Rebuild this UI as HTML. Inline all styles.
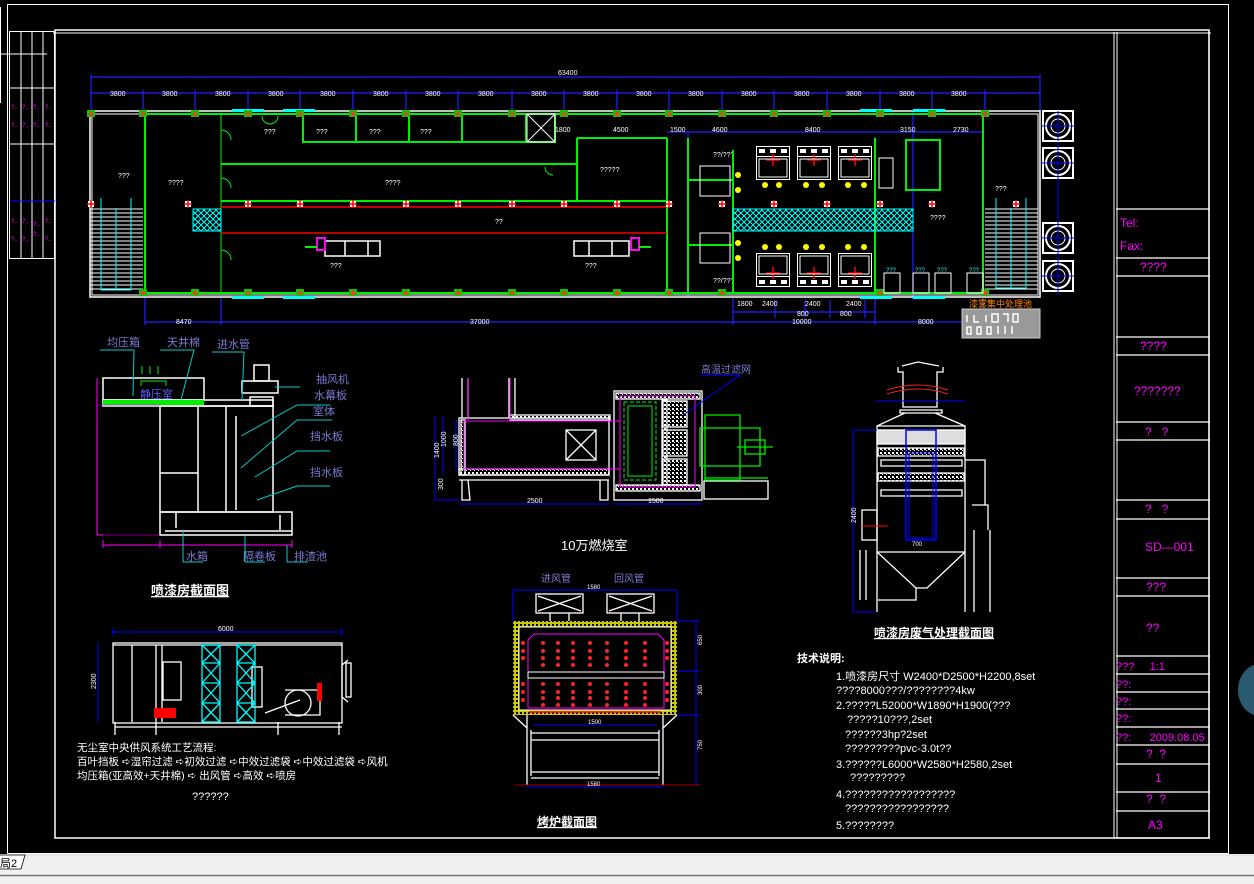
<!DOCTYPE html>
<html><head><meta charset="utf-8"><style>
html,body{margin:0;padding:0;background:#000;width:1254px;height:884px;overflow:hidden}
svg{display:block}
text{font-family:"Liberation Sans","Noto Sans CJK SC",sans-serif}
</style></head><body>
<svg width="1254" height="884" viewBox="0 0 1254 884" xmlns="http://www.w3.org/2000/svg">
<defs>
<pattern id="hx" width="6" height="6" patternUnits="userSpaceOnUse"><path d="M0 0L6 6M6 0L0 6" stroke="#0ff" stroke-width="1"/></pattern>
<pattern id="st" width="10" height="4" patternUnits="userSpaceOnUse"><path d="M0 1H10" stroke="#fff" stroke-width="1"/></pattern>
<pattern id="dot" width="4" height="4" patternUnits="userSpaceOnUse"><rect width="2" height="2" fill="#fff"/><rect x="2" y="2" width="1" height="1" fill="#fff"/></pattern>
<pattern id="ydot" width="4" height="4" patternUnits="userSpaceOnUse"><rect width="4" height="4" fill="#c8c800"/><rect width="2" height="2" fill="#000"/></pattern>
<symbol id="col" width="8" height="8"><rect x="0" y="0" width="8" height="7" fill="#0c0"/><path d="M4 1V7M1 4H7" stroke="#f33" stroke-width="1.5"/></symbol>
<symbol id="rx" width="8" height="8"><rect x="1" y="1" width="6" height="6" fill="#fff"/><path d="M4 0V8M0 4H8" stroke="#f00" stroke-width="1.5"/></symbol>
<symbol id="fan" width="32" height="34"><rect x="1" y="2" width="30" height="30" fill="none" stroke="#fff" stroke-width="2"/><circle cx="16" cy="17" r="12" fill="none" stroke="#fff" stroke-width="2"/><circle cx="16" cy="17" r="7" fill="none" stroke="#fff"/><path d="M0 17H32M16 2V32" stroke="#00f"/></symbol>
<symbol id="mach" width="34" height="34"><rect x="0.5" y="0.5" width="33" height="33" fill="none" stroke="#fff"/><rect x="0.5" y="0.5" width="33" height="10" fill="none" stroke="#fff"/><rect x="3" y="3" width="6" height="4" fill="#fff"/><rect x="14" y="3" width="6" height="4" fill="#fff"/><rect x="25" y="3" width="6" height="4" fill="#fff"/><path d="M17 8V20M10 14H24" stroke="#f00" stroke-width="1.5"/><rect x="3" y="13" width="28" height="18" fill="none" stroke="#fff"/></symbol>
</defs>

<!-- frames -->
<path d="M0.5 7V103" stroke="#fff"/>
<rect x="7.5" y="4.5" width="1221" height="849" fill="none" stroke="#fff"/>
<rect x="55" y="30" width="1154" height="808" fill="none" stroke="#fff" stroke-width="1.5"/>
<path d="M53 33H1211M1114 32V838M1117 32V838" stroke="#fff"/>
<!-- left small table -->
<g stroke="#fff" fill="none"><rect x="9.5" y="31.5" width="45" height="227"/>
<path d="M21 32V258M32 32V258M43 32V258M10 88H55M10 144H55M0 54H47"/></g>
<path d="M10 201H55" stroke="#00f"/>
<g fill="#f0f" font-size="6"><text x="11" y="109">?..</text><text x="22" y="109">?..</text><text x="33" y="109">?..</text><text x="45" y="109">?..</text>
<text x="11" y="127">?..</text><text x="22" y="127">?..</text><text x="33" y="127">?..</text><text x="45" y="127">?..</text>
<text x="11" y="223">?..</text><text x="22" y="223">?..</text><text x="33" y="226">?..</text><text x="45" y="223">?..</text>
<text x="11" y="241">?..</text><text x="22" y="241">?..</text><text x="33" y="236">?..</text><text x="45" y="241">?..</text></g>

<!-- title block -->
<g stroke="#fff" stroke-width="1.2">
<path d="M1116 209H1210M1116 258H1210M1116 276H1210M1116 337H1210M1116 355H1210M1116 422H1210M1116 440H1210M1116 500H1210M1116 519H1210M1116 578H1210M1116 596H1210M1116 656H1210M1116 674H1210M1116 692H1210M1116 709H1210M1116 727H1210M1116 745H1210M1116 764H1210M1116 792H1210M1116 811H1210M1116 838H1210M1209 32V838"/></g>
<g fill="#f0f" font-size="12"><text x="1120" y="227">Tel:</text><text x="1120" y="250">Fax:</text>
<text x="1140" y="271">????</text><text x="1140" y="350">????</text><text x="1134" y="395">???????</text>
<text x="1145" y="436">?&#160;&#160;&#160;?</text><text x="1145" y="513">?&#160;&#160;&#160;?</text>
<text x="1145" y="551">SD—001</text><text x="1146" y="591">???</text><text x="1146" y="632">??</text>
<text x="1116" y="670" font-size="11">???&#160;&#160;&#160;&#160;&#160;1:1</text><text x="1116" y="688" font-size="11">??:</text><text x="1116" y="705" font-size="11">??:</text><text x="1116" y="722" font-size="11">??:</text>
<text x="1116" y="741" font-size="11">??:&#160;&#160;&#160;&#160;&#160;&#160;2009.08.05</text>
<text x="1146" y="758">?&#160;&#160;?</text><text x="1155" y="782">1</text><text x="1146" y="803">?&#160;&#160;?</text><text x="1148" y="829">A3</text></g>
<ellipse cx="1260" cy="690" rx="22" ry="26" fill="#2a5a70"/>

<!-- ===== plan ===== -->
<g stroke="#22f" fill="none" stroke-width="1.2">
<path d="M91 77H1040M91 93H1040M91 74V118M1040 74V118"/>
<path d="M143 90V112M195 90V112M248 90V112M300 90V112M353 90V112M406 90V112M458 90V112M512 90V112M564 90V112M617 90V112M669 90V112M722 90V112M774 90V112M827 90V112M880 90V112M932 90V112M985 90V112"/>
<path d="M145 322H983M145 298V325M221 298V325M733 298V325M875 298V325M983 298V325M733 312H875M733 300V318M775 300V318M805 300V318M830 300V318M865 300V318"/>
<path d="M667 132H983M688 132V297M913 112V170M913 170V300M1040 142V295"/>
</g>
<g fill="#fff" font-size="7"><text x="558" y="75">63400</text>
<text x="110" y="96">3800</text><text x="162" y="96">3800</text><text x="215" y="96">3800</text><text x="268" y="96">3800</text><text x="320" y="96">3800</text><text x="373" y="96">3800</text><text x="425" y="96">3800</text><text x="478" y="96">3800</text><text x="531" y="96">3800</text><text x="583" y="96">3800</text><text x="636" y="96">3800</text><text x="688" y="96">3800</text><text x="741" y="96">3800</text><text x="794" y="96">3800</text><text x="846" y="96">3800</text><text x="899" y="96">3800</text><text x="951" y="96">3800</text>
<text x="176" y="324">8470</text><text x="470" y="324">37000</text><text x="792" y="324">10000</text><text x="918" y="324">8000</text>
<text x="737" y="306">1800</text><text x="762" y="306">2400</text><text x="805" y="306">2400</text><text x="846" y="306">2400</text><text x="797" y="316">800</text><text x="840" y="316">800</text>
<text x="555" y="132">1800</text><text x="613" y="132">4500</text><text x="670" y="132">1500</text><text x="712" y="132">4600</text><text x="805" y="132">8400</text><text x="900" y="132">3150</text><text x="953" y="132">2730</text>
<text x="118" y="178">???</text><text x="168" y="185">????</text><text x="385" y="185">????</text><text x="495" y="224">??</text><text x="600" y="172">?????</text><text x="713" y="157">??/???</text><text x="930" y="220">????</text><text x="995" y="191">???</text><text x="330" y="268">???</text><text x="585" y="268">???</text><text x="713" y="283">??/???</text>
<text x="264" y="134">???</text><text x="316" y="134">???</text><text x="369" y="134">???</text><text x="420" y="134">???</text></g>
<!-- building -->
<rect x="90" y="111" width="950" height="186" fill="none" stroke="#fff" stroke-width="1.5"/>
<rect x="92" y="114" width="946" height="181" fill="none" stroke="#fff"/>
<g stroke="#0e0" fill="none" stroke-width="2">
<path d="M145 114H983M145 293H983M145 114V293M983 114V293"/>
<path d="M221 114V293" stroke-width="1"/>
<rect x="303" y="114" width="252" height="28"/>
<path d="M356 114V142M409 114V142M462 114V142M526 114V142"/>
<path d="M221 164H577M577 138V201M577 138H667M221 201H667M667 138V293M688 138V293M733 150V293M688 245H733M688 180H733M875 138V293"/>
<path d="M906 140H940V190H906Z"/>
</g>
<path d="M221 207H667M221 233H667" stroke="#f00" stroke-width="1.5"/>
<path d="M527 114H555V142H527Z M527 114L555 142M555 114L527 142" stroke="#fff" fill="none"/>
<rect x="193" y="209" width="28" height="22" fill="url(#hx)" stroke="#0ff"/>
<rect x="733" y="209" width="180" height="22" fill="url(#hx)" stroke="#0ff"/>
<rect x="90" y="208" width="53" height="83" fill="url(#st)"/><path d="M101 198V290H131V198M116 208V290" stroke="#0ff" fill="none"/>
<rect x="985" y="208" width="53" height="82" fill="url(#st)"/><path d="M996 198V288H1026V198M1011 208V288" stroke="#0ff" fill="none"/>
<g fill="none" stroke="#0e0"><path d="M221 130A10 10 0 0 1 231 140M221 178A10 10 0 0 1 231 188M221 250A10 10 0 0 1 231 260M262 116A8 8 0 0 0 270 124M278 116A8 8 0 0 1 270 124M545 167A8 8 0 0 0 553 175"/></g>
<g fill="#0ff"><rect x="232" y="109" width="32" height="3"/><rect x="283" y="109" width="32" height="3"/><rect x="232" y="296" width="32" height="3"/><rect x="283" y="296" width="32" height="3"/><rect x="860" y="109" width="32" height="3"/><rect x="913" y="109" width="32" height="3"/><rect x="860" y="296" width="32" height="3"/><rect x="913" y="296" width="32" height="3"/></g>
<g>
<use href="#col" x="87" y="110"/><use href="#col" x="139" y="110"/><use href="#col" x="191" y="110"/><use href="#col" x="244" y="110"/><use href="#col" x="296" y="110"/><use href="#col" x="349" y="110"/><use href="#col" x="402" y="110"/><use href="#col" x="454" y="110"/><use href="#col" x="508" y="110"/><use href="#col" x="560" y="110"/><use href="#col" x="613" y="110"/><use href="#col" x="665" y="110"/><use href="#col" x="718" y="110"/><use href="#col" x="770" y="110"/><use href="#col" x="823" y="110"/><use href="#col" x="876" y="110"/><use href="#col" x="928" y="110"/><use href="#col" x="981" y="110"/>
<use href="#col" x="139" y="289"/><use href="#col" x="191" y="289"/><use href="#col" x="244" y="289"/><use href="#col" x="296" y="289"/><use href="#col" x="349" y="289"/><use href="#col" x="402" y="289"/><use href="#col" x="454" y="289"/><use href="#col" x="508" y="289"/><use href="#col" x="560" y="289"/><use href="#col" x="613" y="289"/><use href="#col" x="665" y="289"/><use href="#col" x="718" y="289"/><use href="#col" x="876" y="289"/><use href="#col" x="981" y="289"/>
<use href="#rx" x="184" y="200"/><use href="#rx" x="244" y="200"/><use href="#rx" x="296" y="200"/><use href="#rx" x="349" y="200"/><use href="#rx" x="402" y="200"/><use href="#rx" x="454" y="200"/><use href="#rx" x="508" y="200"/><use href="#rx" x="560" y="200"/><use href="#rx" x="613" y="200"/><use href="#rx" x="665" y="200"/><use href="#rx" x="718" y="200"/><use href="#rx" x="770" y="200"/><use href="#rx" x="823" y="200"/><use href="#rx" x="876" y="200"/><use href="#rx" x="928" y="200"/><use href="#rx" x="1012" y="200"/><use href="#rx" x="87" y="200"/></g>
<!-- booths -->
<g fill="none" stroke="#fff" stroke-width="1.5"><rect x="325" y="241" width="55" height="15"/><path d="M345 241V256M368 241V256"/><rect x="574" y="241" width="55" height="15"/><path d="M589 241V256M612 241V256"/></g>
<rect x="317" y="238" width="8" height="12" fill="none" stroke="#f0f" stroke-width="2"/><rect x="631" y="238" width="8" height="12" fill="none" stroke="#f0f" stroke-width="2"/>
<path d="M305 247H317M639 247H651" stroke="#0e0" stroke-width="2"/>
<g><use href="#mach" x="756" y="146"/><use href="#mach" x="797" y="146"/><use href="#mach" x="838" y="146"/>
<use href="#mach" x="756" y="253" transform="rotate(180 773 270)"/><use href="#mach" x="797" y="253" transform="rotate(180 814 270)"/><use href="#mach" x="838" y="253" transform="rotate(180 855 270)"/></g>
<g fill="none" stroke="#fff"><rect x="700" y="166" width="30" height="30"/><rect x="700" y="233" width="30" height="30"/><rect x="879" y="158" width="14" height="30"/></g>
<g fill="#ff0"><circle cx="765" cy="185" r="3"/><circle cx="779" cy="185" r="3"/><circle cx="806" cy="185" r="3"/><circle cx="822" cy="185" r="3"/><circle cx="848" cy="185" r="3"/><circle cx="864" cy="185" r="3"/><circle cx="738" cy="175" r="3"/><circle cx="738" cy="190" r="3"/>
<circle cx="765" cy="247" r="3"/><circle cx="779" cy="247" r="3"/><circle cx="806" cy="247" r="3"/><circle cx="822" cy="247" r="3"/><circle cx="848" cy="247" r="3"/><circle cx="864" cy="247" r="3"/><circle cx="738" cy="243" r="3"/><circle cx="738" cy="258" r="3"/></g>
<g fill="none" stroke="#fff"><rect x="884" y="273" width="16" height="20"/><rect x="913" y="273" width="16" height="20"/><rect x="935" y="273" width="16" height="20"/><rect x="967" y="273" width="16" height="20"/></g>
<g fill="#0ff" font-size="6"><text x="886" y="272">???</text><text x="915" y="272">???</text><text x="937" y="272">???</text><text x="969" y="272">???</text></g>
<g><use href="#fan" x="1042" y="109"/><use href="#fan" x="1042" y="146"/><use href="#fan" x="1042" y="221"/><use href="#fan" x="1042" y="259"/></g>
<path d="M1058 142V295" stroke="#00f"/>
<rect x="962" y="309" width="78" height="29" fill="#999" stroke="#ccc"/>
<g stroke="#fff" fill="none" stroke-width="1.5"><path d="M967 315V322M974 315V322H979M986 315V322M992 314H998V322H992ZM1003 314H1008V322M1013 314H1018V322H1013ZM967 327H971V334H967ZM977 327H981V334H977ZM987 327H991V334H987ZM998 326V334M1005 326V334M1012 326V334"/></g>
<text x="969" y="307" fill="#f80" font-size="9">漆雾集中处理池</text>

<!-- ===== spray booth section ===== -->
<g stroke="#fff" fill="none" stroke-width="1.5">
<rect x="103" y="378" width="101" height="22"/><rect x="103" y="400" width="170" height="6"/>
<rect x="160" y="406" width="113" height="106"/><path d="M198 406V512M226 406V512M236 416V510M160 473H198M160 512H292V535H160ZM165 531H292"/>
<rect x="242" y="381" width="36" height="12"/><rect x="254" y="365" width="15" height="16"/><rect x="250" y="397" width="23" height="9"/>
<path d="M176 512V528M280 515V530"/>
</g>
<rect x="103" y="400" width="101" height="5" fill="#0e0"/>
<path d="M141 386V381H166V386" stroke="#0e0" fill="none"/><path d="M142 366V374M150 366V374M158 366V374" stroke="#0e0"/>
<path d="M97 378V535M97 535H103M103 545H292M103 540V548M160 540V548M292 540V548" stroke="#f0f"/>
<path d="M98 405H160M98 535H160" stroke="#f0f" stroke-width=".6"/>
<g stroke="#0cc" fill="none"><path d="M100 350H134L133 396M160 350H194L181 400M212 352H244L242 400M275 387H300M241 436L297 405H330M241 468L297 420H332M255 477L297 451H330M257 500L297 486H330M183 562H203M183 562L183 531M245 562H265M245 562V536M287 562H308M287 562V545"/></g>
<g fill="#7a7ad0" font-size="11"><text x="107" y="346">均压箱</text><text x="167" y="346">天井棉</text><text x="217" y="348">进水管</text>
<text x="316" y="383">抽风机</text><text x="314" y="399">水幕板</text><text x="313" y="415">室体</text><text x="310" y="440">挡水板</text><text x="310" y="476">挡水板</text>
<text x="186" y="560">水箱</text><text x="243" y="560">隔卷板</text><text x="294" y="560">排渣池</text><text x="140" y="398" fill="#5b5bff">静压室</text></g>
<text x="151" y="595" fill="#fff" font-size="13" font-weight="bold" text-decoration="underline">喷漆房截面图</text>

<!-- air unit -->
<path d="M113 632H342M113 628V636M342 628V636M98 643V722" stroke="#00f"/>
<text x="218" y="631" fill="#fff" font-size="7">6000</text><text x="92" y="685" fill="#fff" font-size="7" transform="rotate(-90 96 685)">2300</text>
<g stroke="#fff" fill="none" stroke-width="1.3"><rect x="113" y="643" width="229" height="80"/><path d="M113 645H342M132 645V722M156 645V722M162 645V722M115 727H342M115 722V735M156 722V735M278 722V735M339 722V735"/>
<rect x="163" y="662" width="18" height="38"/><rect x="252" y="667" width="10" height="40"/><path d="M342 665L342 697M342 665L348 660M342 697L348 702"/><rect x="346" y="663" width="5" height="34"/>
<circle cx="298" cy="703" r="13"/><path d="M285 690H320V715H285M265 713L300 700"/></g>
<rect x="154" y="708" width="22" height="10" fill="#f00"/><rect x="317" y="683" width="5" height="18" fill="#f00"/>
<g stroke="#0ff" fill="none" stroke-width="1.3"><rect x="202" y="645" width="18" height="77"/><path d="M202 663H220M202 683H220M202 703H220M202 645L220 663M220 645L202 663M202 663L220 683M220 663L202 683M202 683L220 703M220 683L202 703M202 703L220 722M220 703L202 722"/>
<rect x="237" y="645" width="18" height="77"/><path d="M237 663H255M237 683H255M237 703H255M237 645L255 663M255 645L237 663M237 663L255 683M255 663L237 683M237 683L255 703M255 683L237 703M237 703L255 722M255 703L237 722"/></g>
<g fill="#fff" font-size="10.5"><text x="77" y="751">无尘室中央供风系统工艺流程:</text>
<text x="77" y="765">百叶挡板 ➪湿帘过滤 ➪初效过滤 ➪中效过滤袋 ➪中效过滤袋 ➪风机</text>
<text x="77" y="779">均压箱(亚高效+天井棉) ➪ 出风管 ➪高效 ➪喷房</text>
<text x="192" y="800" font-size="11">??????</text></g>

<!-- ===== burner ===== -->
<g stroke="#fff" fill="none" stroke-width="1.3"><rect x="459" y="418" width="150" height="57"/><rect x="461" y="420" width="4" height="55" fill="url(#dot)"/><rect x="459" y="469" width="150" height="6" fill="url(#dot)"/><rect x="510" y="415" width="100" height="5" fill="url(#dot)"/>
<path d="M462 378V418M468 378V418M509 378V418M515 378V418M459 480H609M462 480L462 500H470L468 480M600 480L600 500H608L608 480"/>
<rect x="566" y="430" width="30" height="30"/><path d="M566 430L596 460M596 430L566 460"/>
<rect x="614" y="391" width="88" height="109"/><rect x="616" y="393" width="84" height="6" fill="url(#dot)"/><rect x="616" y="485" width="84" height="6" fill="url(#dot)"/>
<rect x="662" y="400" width="5" height="85" fill="url(#dot)"/><rect x="663" y="401" width="24" height="26" fill="url(#dot)"/><rect x="663" y="430" width="24" height="26" fill="url(#dot)"/><rect x="663" y="459" width="24" height="26" fill="url(#dot)"/>
<rect x="704" y="481" width="64" height="18"/></g>
<path d="M468 378V420M510 378V420M464 421H620M464 469H620M464 421V469M620 396V487H695V396Z" stroke="#f0f" fill="none"/>
<rect x="624" y="402" width="32" height="78" fill="none" stroke="#0e0" stroke-dasharray="4 2"/><rect x="628" y="406" width="24" height="70" fill="none" stroke="#0e0"/>
<g stroke="#0e0" fill="none" stroke-width="1.3"><path d="M705 415H740V480H705ZM700 428H760V466H700ZM737 447H773M705 478H768"/><rect x="745" y="440" width="20" height="14"/></g>
<path d="M435 416V500M443 416V475M456 420V470M435 500H459M459 504H609M614 504H702" stroke="#00f" fill="none"/>
<g fill="#fff" font-size="7"><text x="527" y="503">2500</text><text x="648" y="503">1500</text>
<text x="432" y="465" transform="rotate(-90 432 458)">1400</text><text x="441" y="452" transform="rotate(-90 441 447)">1000</text><text x="454" y="450" transform="rotate(-90 454 446)">800</text><text x="440" y="493" transform="rotate(-90 440 490)">300</text></g>
<text x="701" y="373" fill="#7a7ad0" font-size="10">高温过滤网</text><path d="M700 375H740L683 415" stroke="#00f" fill="none"/>
<text x="561" y="550" fill="#fff" font-size="13">10万燃烧室</text>

<!-- ===== oven ===== -->
<text x="541" y="582" fill="#7a7ad0" font-size="10">进风管</text><text x="614" y="582" fill="#7a7ad0" font-size="10">回风管</text>
<path d="M513 590H677M513 590V622M677 590V622" stroke="#00f" fill="none"/><text x="587" y="589" fill="#fff" font-size="6">1580</text>
<g stroke="#fff" fill="none" stroke-width="1.3"><rect x="536" y="594" width="47" height="19"/><path d="M538 596L581 611M581 596L538 611"/><rect x="607" y="594" width="47" height="19"/><path d="M609 596L652 611M652 596L609 611"/>
<path d="M550 613V637M569 613V637M621 613V637M639 613V637"/></g>
<path d="M513 621H677V715H513Z" fill="url(#ydot)"/>
<rect x="519" y="627" width="152" height="83" fill="#000" stroke="#fff"/>
<path d="M528 640L534 634H658L664 640V708H528Z" fill="none" stroke="#f0f"/>
<rect x="528" y="672" width="136" height="6" fill="none" stroke="#fff"/>
<g fill="#f22"><g id="rr"><circle cx="543" cy="643" r="2"/><circle cx="558" cy="643" r="2"/><circle cx="573" cy="643" r="2"/><circle cx="590" cy="643" r="2"/><circle cx="607" cy="643" r="2"/><circle cx="626" cy="643" r="2"/><circle cx="645" cy="643" r="2"/></g>
<use href="#rr" y="8"/><use href="#rr" y="15"/><use href="#rr" y="22"/><use href="#rr" y="41"/><use href="#rr" y="49"/><use href="#rr" y="55"/><use href="#rr" y="62"/>
<circle cx="523" cy="643" r="2"/><circle cx="523" cy="651" r="2"/><circle cx="523" cy="658" r="2"/><circle cx="523" cy="684" r="2"/><circle cx="523" cy="692" r="2"/><circle cx="523" cy="700" r="2"/><circle cx="667" cy="643" r="2"/><circle cx="667" cy="651" r="2"/><circle cx="667" cy="658" r="2"/><circle cx="667" cy="684" r="2"/><circle cx="667" cy="692" r="2"/><circle cx="667" cy="700" r="2"/></g>
<path d="M529 712H661" stroke="#f00" stroke-width="1.5"/>
<g stroke="#fff" fill="none" stroke-width="1.3"><path d="M513 715L527 728M677 715L663 728M527 715V785M663 715V785M531 733H659M531 740H659M531 772H659M531 778H659M531 730V776M659 730V776"/></g>
<path d="M533 725H657M526 787H664M696 621V785M677 621H700M677 671H700M677 715H700" stroke="#00f" fill="none"/>
<path d="M515 785H700" stroke="#a00"/>
<g fill="#fff" font-size="6"><text x="588" y="724">1500</text><text x="587" y="786">1580</text><text x="702" y="645" transform="rotate(-90 702 645)">650</text><text x="702" y="695" transform="rotate(-90 702 695)">300</text><text x="702" y="750" transform="rotate(-90 702 750)">750</text></g>
<text x="537" y="826" fill="#fff" font-size="12" font-weight="bold" text-decoration="underline">烤炉截面图</text>

<!-- ===== tower ===== -->
<g stroke="#fff" fill="none" stroke-width="1.3">
<path d="M898 367V372H903V407H937V372H943V367M902 366L918 362L939 366M900 410H942V413H900ZM905 413L877 426M935 413L965 426"/>
<path d="M877 426H965V552H877ZM877 552L916 588H927L965 552M877 552V612M965 552V612M916 588V600H878"/>
<rect x="877" y="430" width="88" height="14" fill="#ddd"/><rect x="878" y="448" width="86" height="8" fill="url(#dot)"/><rect x="878" y="473" width="86" height="8" fill="url(#dot)"/>
<path d="M881 460H962V466H881ZM881 490H962V496H881ZM965 460H985V505M972 505H988V530M974 530V612M990 530V612"/>
<rect x="862" y="510" width="15" height="30"/><path d="M860 550V600M866 550V600"/>
</g>
<path d="M887 390Q918 380 948 390M887 394Q918 384 948 394" stroke="#e22" fill="none"/>
<rect x="906" y="430" width="30" height="110" fill="none" stroke="#00f" stroke-width="1.5"/><rect x="909" y="453" width="24" height="85" fill="none" stroke="#00f"/>
<path d="M876 401H965M853 430V612M853 430H877M853 612H875" stroke="#00f" fill="none"/>
<path d="M862 526H888" stroke="#f00"/>
<text x="912" y="546" fill="#fff" font-size="6">700</text><text x="848" y="525" fill="#fff" font-size="7" transform="rotate(-90 851 520)">2400</text>
<text x="874" y="637" fill="#fff" font-size="12" font-weight="bold" text-decoration="underline">喷漆房废气处理截面图</text>
<g fill="#fff" font-size="11"><text x="797" y="662" font-weight="bold">技术说明:</text>
<text x="836" y="680">1.喷漆房尺寸 W2400*D2500*H2200,8set</text>
<text x="836" y="694">????8000???/????????4kw</text>
<text x="836" y="709">2.?????L52000*W1890*H1900(???</text>
<text x="847" y="723">?????10???,2set</text>
<text x="845" y="738">??????3hp?2set</text>
<text x="845" y="752">?????????pvc-3.0t??</text>
<text x="836" y="768">3.??????L6000*W2580*H2580,2set</text>
<text x="850" y="781">?????????</text>
<text x="836" y="798">4.??????????????????</text>
<text x="845" y="812">?????????????????</text>
<text x="836" y="829">5.????????</text></g>

<!-- bottom bar -->
<rect x="0" y="854" width="1254" height="30" fill="#f0f0f0"/>
<path d="M0 855H1254" stroke="#ddd"/>
<path d="M0 875.5H1254" stroke="#777" stroke-width="1.5"/>
<path d="M0 869H21L25 855H0" fill="#fff" stroke="#000" stroke-width=".8"/>
<text x="0" y="867" font-size="11" fill="#000">局2</text>
</svg>
</body></html>
